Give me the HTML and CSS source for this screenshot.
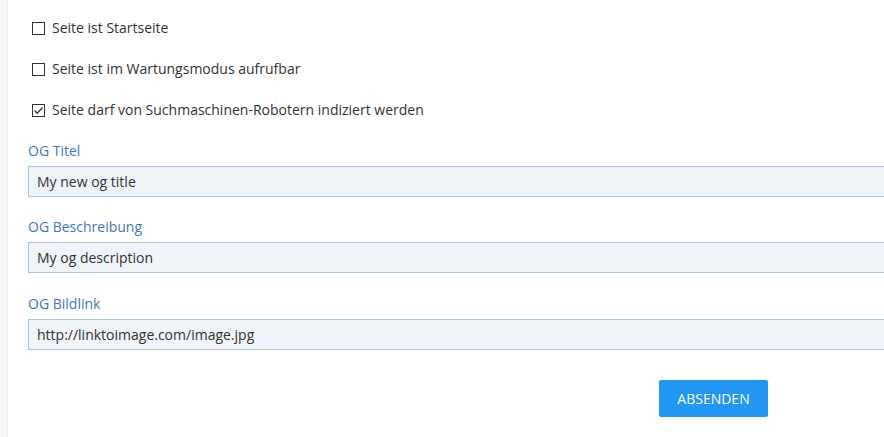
FILE: index.html
```html
<!DOCTYPE html>
<html lang="de">
<head>
<meta charset="utf-8">
<title>Seiteneinstellungen</title>
<link rel="stylesheet" href="styles.css">
</head>
<body>
<div class="page">
  <div class="side"></div>
  <form class="main">
    <label class="check">
      <span class="box"></span>
      <span>Seite ist Startseite</span>
    </label>
    <label class="check">
      <span class="box"></span>
      <span>Seite ist im Wartungsmodus aufrufbar</span>
    </label>
    <label class="check">
      <span class="box"><svg viewBox="0 0 13 13" width="13" height="13"><path d="M2.5 6.5 L5.2 9.2 L10.5 3.5" fill="none" stroke="#333" stroke-width="1.3"/></svg></span>
      <span>Seite darf von Suchmaschinen-Robotern indiziert werden</span>
    </label>
    <div class="field">
      <div class="label">OG Titel</div>
      <div class="input">My new og title</div>
    </div>
    <div class="field field-wide">
      <div class="label">OG Beschreibung</div>
      <div class="input">My og description</div>
    </div>
    <div class="field">
      <div class="label">OG Bildlink</div>
      <div class="input">http://linktoimage.com/image.jpg</div>
    </div>
    <div class="actions">
      <button type="button" class="btn">ABSENDEN</button>
    </div>
  </form>
</div>
</body>
</html>
```
FILE: styles.css
```css
html, body {
  margin: 0;
  padding: 0;
  background: #fff;
  overflow: hidden;
}
body {
  font-family: "Open Sans", "Liberation Sans", sans-serif;
  font-size: 14px;
  color: #333;
}
.page {
  display: flex;
  min-height: 437px;
}
.side {
  width: 7px;
  flex: 0 0 7px;
  background: #f7f7f7;
  border-right: 1px solid #ececec;
}
.main {
  flex: 1;
  padding: 18px 0 0 20px;
  display: flex;
  flex-direction: column;
}
.check {
  display: flex;
  align-items: center;
  height: 20px;
  margin-bottom: 21px;
  padding-left: 4px;
  line-height: 20px;
}
.box {
  width: 11px;
  height: 11px;
  border: 1px solid #333;
  margin-right: 7px;
  position: relative;
  flex: 0 0 11px;
}
.box svg {
  position: absolute;
  left: -1px;
  top: -1px;
}
.field {
  margin-bottom: 20px;
}
.field-wide {
  margin-bottom: 21px;
}
.label {
  color: #3d78b9;
  line-height: 20px;
  height: 20px;
  margin-bottom: 5px;
}
.input {
  box-sizing: border-box;
  width: calc(100% + 20px);
  height: 31px;
  line-height: 29px;
  padding-left: 8px;
  background: #eff4f9;
  border: 1px solid #a9c5e0;
}
.actions {
  padding-left: 631px;
  margin-top: 10px;
}
.btn {
  font-family: "Open Sans", "Liberation Sans", sans-serif;
  font-size: 14px;
  color: #fff;
  background: #2196f3;
  border: 0;
  border-radius: 2px;
  width: 109px;
  height: 37px;
  padding: 0;
}
```
